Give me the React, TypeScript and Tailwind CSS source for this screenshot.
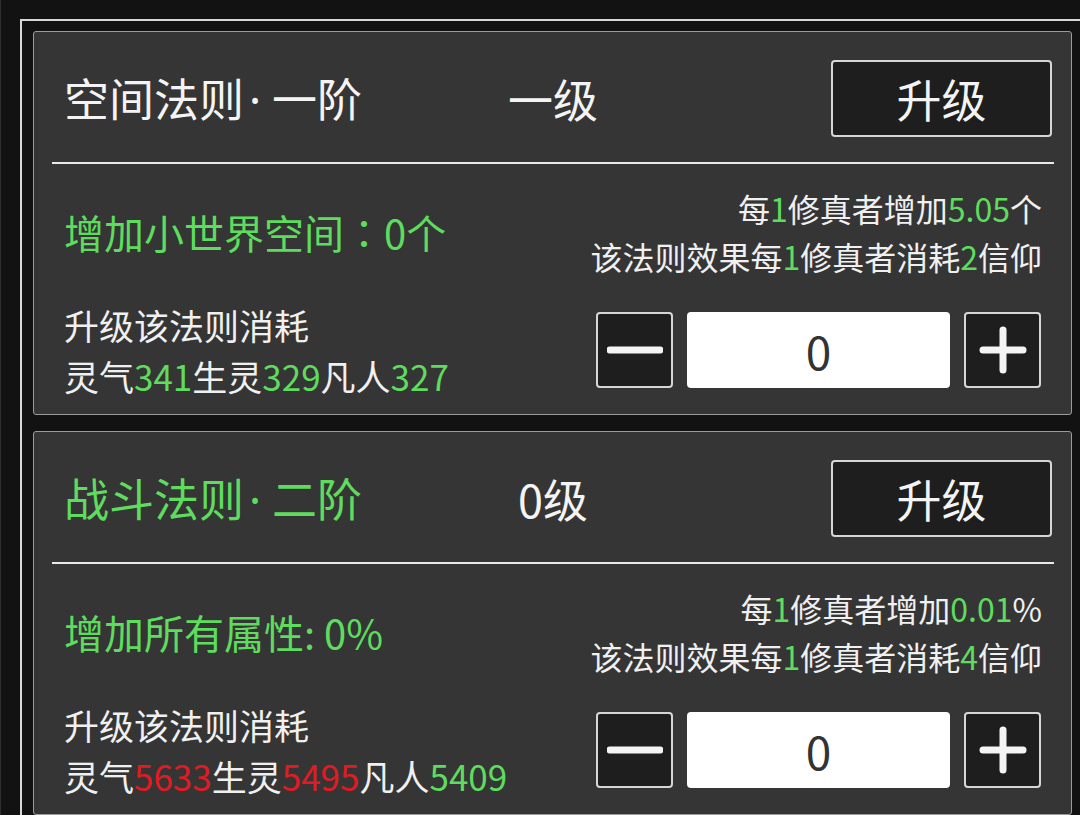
import React from 'react';

type Part = { t: string; c?: 'g' | 'r' };

type Law = {
  name: string;
  rank: string;
  titleGreen: boolean;
  level: string;
  effect: React.ReactNode;
  perLine: Part[];
  costLine: Part[];
  resources: Part[];
};

const laws: Law[] = [
  {
    name: '空间法则',
    rank: '一阶',
    titleGreen: false,
    level: '一级',
    effect: (
      <>
        增加小世界空间<span style={{ fontFamily: '"Noto Sans CJK TC", sans-serif' }}>：</span>0个
      </>
    ),
    perLine: [{ t: '每' }, { t: '1', c: 'g' }, { t: '修真者增加' }, { t: '5.05', c: 'g' }, { t: '个' }],
    costLine: [{ t: '该法则效果每' }, { t: '1', c: 'g' }, { t: '修真者消耗' }, { t: '2', c: 'g' }, { t: '信仰' }],
    resources: [{ t: '灵气' }, { t: '341', c: 'g' }, { t: '生灵' }, { t: '329', c: 'g' }, { t: '凡人' }, { t: '327', c: 'g' }],
  },
  {
    name: '战斗法则',
    rank: '二阶',
    titleGreen: true,
    level: '0级',
    effect: '增加所有属性: 0%',
    perLine: [{ t: '每' }, { t: '1', c: 'g' }, { t: '修真者增加' }, { t: '0.01', c: 'g' }, { t: '%' }],
    costLine: [{ t: '该法则效果每' }, { t: '1', c: 'g' }, { t: '修真者消耗' }, { t: '4', c: 'g' }, { t: '信仰' }],
    resources: [{ t: '灵气' }, { t: '5633', c: 'r' }, { t: '生灵' }, { t: '5495', c: 'r' }, { t: '凡人' }, { t: '5409', c: 'g' }],
  },
];

function Parts({ parts }: { parts: Part[] }) {
  return (
    <>
      {parts.map((p, i) => (
        <span key={i} className={p.c === 'g' ? 'text-[#5ddc5d]' : p.c === 'r' ? 'text-[#e01b24]' : ''}>
          {p.t}
        </span>
      ))}
    </>
  );
}

function StepButton({ plus }: { plus?: boolean }) {
  return (
    <button className="flex h-[76px] w-[77px] items-center justify-center rounded-[4px] border-2 border-[#d6d6d6] bg-[#1e1e1e]">
      <svg width="56" height="48" viewBox="0 0 56 48">
        {plus ? (
          <>
            <line x1="8" y1="24" x2="48" y2="24" stroke="#f4f4f4" strokeWidth="7" strokeLinecap="round" />
            <line x1="28" y1="4" x2="28" y2="44" stroke="#f4f4f4" strokeWidth="7" strokeLinecap="round" />
          </>
        ) : (
          <line x1="3" y1="24" x2="53" y2="24" stroke="#f4f4f4" strokeWidth="7" strokeLinecap="round" />
        )}
      </svg>
    </button>
  );
}

function LawCard({ law }: { law: Law }) {
  return (
    <div className="flex h-[384px] flex-col rounded-[3px] border border-[#9c9c9c] bg-[#353535]">
      <div className="flex items-center pl-[30px] pr-[19px] pt-[28px] pb-[25px]">
        <div className={`w-[410px] text-[45px] leading-none ${law.titleGreen ? 'text-[#5ddc5d]' : 'text-[#f4f4f4]'}`}>
          {law.name}
          <span className="ml-[5px] mr-[11px]" style={{ fontFamily: '"Noto Sans", sans-serif' }}>
            ·
          </span>
          {law.rank}
        </div>
        <div className="w-[158px] text-center text-[45px] leading-none text-[#f4f4f4]">{law.level}</div>
        <button className="ml-auto flex h-[77px] w-[221px] items-center justify-center rounded-[4px] border-2 border-[#d6d6d6] bg-[#1e1e1e] text-[45px] leading-none text-[#f4f4f4]">
          升级
        </button>
      </div>
      <div className="ml-[18px] mr-[17px] h-[2px] bg-[#e8e8e8]" />
      <div className="mt-[20px] flex items-center pl-[30px] pr-[29px]">
        <div className="text-[40px] leading-none text-[#5ddc5d]">{law.effect}</div>
        <div className="ml-auto text-right text-[32px] leading-[48px] text-[#f0f0f0]">
          <div>
            <Parts parts={law.perLine} />
          </div>
          <div>
            <Parts parts={law.costLine} />
          </div>
        </div>
      </div>
      <div className="mt-[19px] flex items-center pl-[30px] pr-[30px]">
        <div className="text-[35px] leading-[51px] text-[#f0f0f0]">
          <div>升级该法则消耗</div>
          <div>
            <Parts parts={law.resources} />
          </div>
        </div>
        <div className="ml-auto flex items-center gap-[14px]">
          <StepButton />
          <div className="flex h-[76px] w-[263px] items-center justify-center rounded-[4px] bg-white text-[46px] leading-none text-[#333]">
            0
          </div>
          <StepButton plus />
        </div>
      </div>
    </div>
  );
}

export default function App() {
  return (
    <div
      className="h-[815px] w-[1080px] overflow-hidden border-l border-[#2e2e2e] bg-[#121212]"
      style={{ fontFamily: '"Noto Sans CJK SC", "Noto Sans", sans-serif' }}
    >
      <div className="ml-[19px] mt-[19px] h-[900px] border-l-2 border-t-2 border-[#d8d8d8] pl-[11px] pt-[10px]">
        <div className="flex w-[1039px] flex-col gap-[16px]">
          {laws.map((law) => (
            <LawCard key={law.name} law={law} />
          ))}
        </div>
      </div>
    </div>
  );
}
